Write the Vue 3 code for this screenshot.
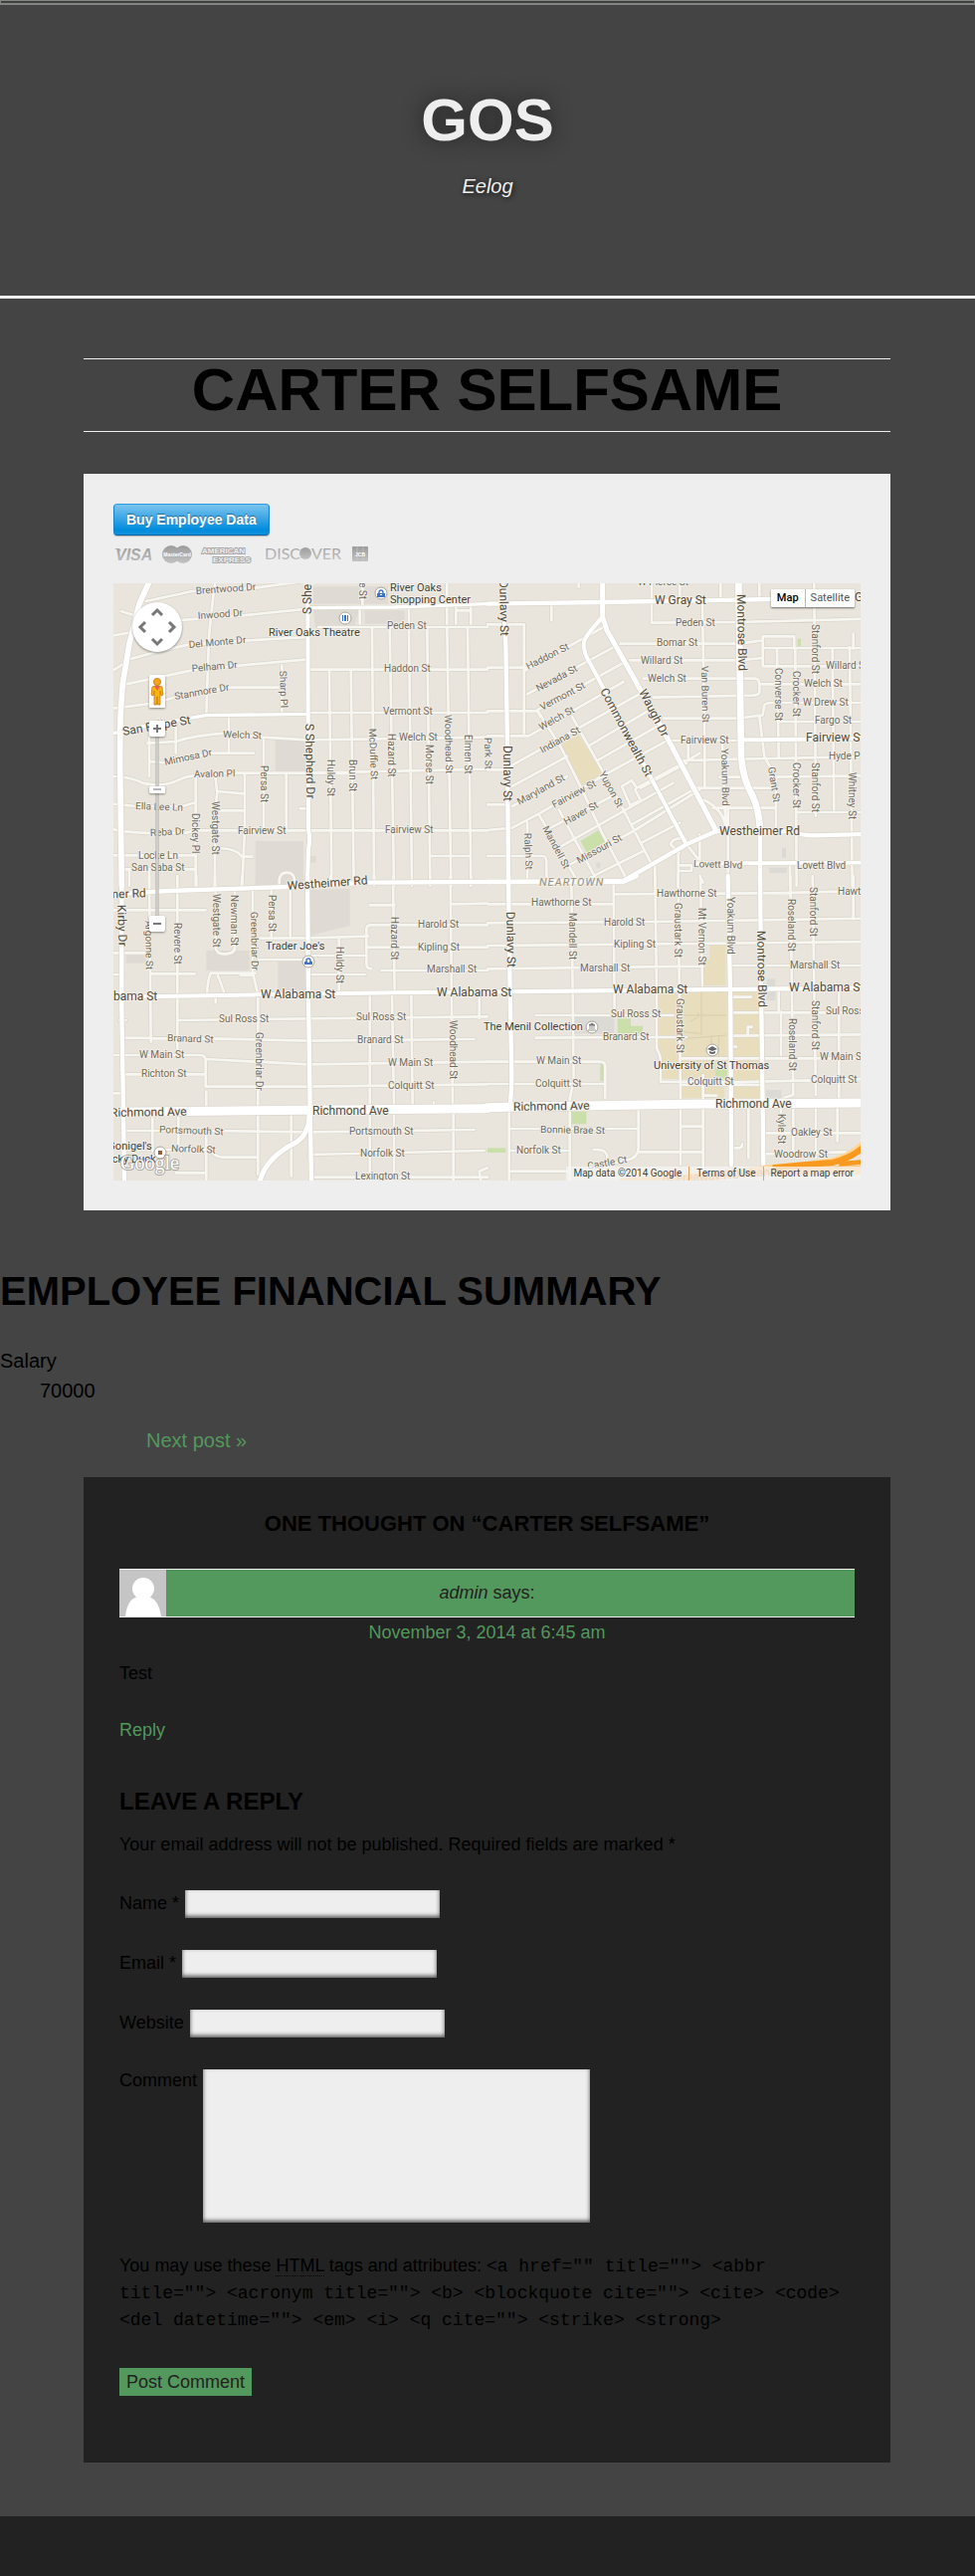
<script setup>
import { ref } from 'vue'

const mapType = ref('Map')
const fields = [
  { id: 'author', label: 'Name *', type: 'text' },
  { id: 'email', label: 'Email *', type: 'email' },
  { id: 'url', label: 'Website', type: 'url' },
]
const allowedTags =
  '<a href="" title=""> <abbr title=""> <acronym title=""> <b> <blockquote cite=""> <cite> <code> <del datetime=""> <em> <i> <q cite=""> <strike> <strong>'

// The map is drawn on four sheets, three sheet units to one map pixel.
const origin = { nw: [-12, -18], ne: [1128, -18], sw: [-12, 882], se: [1128, 882] }
const sheets = [
  {
    id: 'nw',
    areas: [
      ['block', 'M615 28H840V80H615ZM615 97H752L740 145 620 150ZM770 100H890V140H770ZM500 490h92v95h-92ZM440 795H585V930H440ZM605 840h18v20h-18Z'],
    ],
    minor:
      'M110 72L250 42 440 32 600 10M200 130L400 115 600 95M35 102L85 118M12 175L80 163M50 250L130 228 240 202 420 190 600 180M50 322L250 280 400 265 600 247M12 395L130 380 240 350 370 332H520M318 18Q310 80 300 180L292 412M520 265V405M12 280L40 262M115 500L200 495Q260 475 350 470L465 482 600 490 1140 482M120 555L180 560 310 530H435M12 600Q60 600 100 620 160 635 210 610 250 590 380 590H600L1140 578M12 683L80 690 220 690 260 678M12 760Q80 775 230 770L260 763H1140M12 838H260M40 880H260M120 470V600M200 440V530M360 415V525M465 490V760M533 590V760M260 590V930M318 590L325 650 318 700V930M408 590V760L400 930M325 645L405 652M325 703H405M325 817Q380 815 400 842H430M575 697H600M630 150H1140M763 18V90M755 95V140M903 95V150M1045 90V140M1090 90V140M1018 18V140M1045 100H1090M605 278H1140M605 408H1140M663 280L670 930M728 280L737 930M792 150L798 930M845 150L858 930M903 150L912 930M958 150L967 930M1018 150L1030 930M1080 150L1090 930M970 840H1085M512 930V912Q515 890 535 890 556 890 558 912V930M60 880V930M120 880V930',
    major: [
      [10, 'M12 470L100 450 290 416 600 412M600 92L860 90 1140 80'],
      [17, 'M118 18L90 80 60 200 40 320 33 420 32 560 37 930'],
      [12, 'M598 18L600 760Q607 790 600 820L597 930'],
    ],
  },
  {
    id: 'ne',
    areas: [
      ['school', 'M215 505L275 475 345 590 340 605 290 632Z'],
      ['park', 'M280 795L335 762 358 795 300 830ZM935 185h10v22h-10Z'],
      ['steel', 'M850 875h52v16h-52ZM888 815h12v30h-12ZM328 860h12v15h-12Z'],
    ],
    minor:
      'M0 142H110V470M0 272H115M0 403H150L160 420M0 478H125L410 315M115 280L350 150M120 352L390 205M150 400L415 255M50 580L470 345M60 637L240 540M310 505L480 405M75 690L240 600M335 550L510 450M75 755L160 710 345 600 545 490M190 755L375 660M215 815L560 620M250 865L440 765 640 640M310 905L470 825M435 745L630 635M465 800L580 740M150 400L220 510 285 640 345 770 420 910M255 420L345 580 410 700 495 865M155 715L265 905M215 700L325 905M495 137L760 135 1140 125M495 18V135M580 18V60M703 18V60M275 18V30M193 85V130M820 18V60M400 200H760L830 190M430 250H760L830 243M470 305H805Q820 305 820 325V345Q820 355 800 356L500 362M530 425H760L830 415 835 385Q840 378 860 378H1140M550 492H765M590 552L760 548 1140 540M620 635H870M700 602H760M860 602L1140 598M680 695H870M930 708H1140M830 178H925V213M830 178V268H1140M830 213H1140M820 322H1140M1103 170V215M878 435H1140M648 75L655 500V635M605 495V550M708 500L718 750M873 215L878 540M928 215L932 930M985 18L990 720M1040 213L1045 700M1092 210L1100 930M820 420L835 540 870 605V750M640 775V850M725 700V930M650 670Q715 700 718 760M505 870V930M575 830V930M580 885H615V868H580M120 740V905M0 840H165Q178 840 178 860V905M0 762L75 755M0 685H60M0 580H50M640 530L600 555 450 635 435 612 405 630 430 687 462 672 445 640M600 560L462 635M600 790Q560 780 552 805L578 830M600 805L640 855M912 860V930',
    major: [
      [11, 'M630 862L1140 860'],
      [13, 'M0 80L350 75 760 68 1140 60M45 18L55 200 60 500 63 930'],
      [15, 'M347 18V120L360 160 400 230 540 480 690 765'],
      [12, 'M347 120Q290 180 290 200 290 230 310 260L480 580 600 805M765 490L1140 486'],
      [13, 'M0 918L410 915 600 805 690 765 920 765Q940 778 990 778L1140 774'],
      [20, 'M757 18L765 540Q770 610 800 660 818 700 822 760'],
      [13, 'M822 750V930'],
    ],
  },
  {
    id: 'sw',
    areas: [
      ['block', 'M605 42L725 38V150L605 180ZM292 225h130v60h-130ZM508 255h88v100h-88ZM50 235h62v28h-62ZM440 0h85v30h-85Z'],
    ],
    minor:
      'M12 103H290M12 232H120M125 295H258M12 297H40M205 0V520M120 0L125 500M320 30V215Q322 235 345 235 378 235 378 215V40M318 0V30L300 42M318 30L332 42M400 0L398 30 385 42M398 30L412 42M262 0V30M432 40V290L448 360V690M488 40V185M545 30V180M450 188L600 187 780 182M450 252H600M600 240H775M790 280Q775 280 775 265V160Q775 148 790 148H1140M785 88H860M1035 85L1140 83M855 0L860 350M1028 0L1035 690M775 215H1140M820 285H1140M605 297H770M692 185V350M295 350Q295 320 305 293H440M325 295Q335 320 345 350M395 300H430M320 365V382M30 435H50M205 435L600 430 1140 424M40 488L300 490 600 497 1100 492M12 540H270Q290 540 290 555V635M290 552L600 568 1140 560M35 598H290M290 635H600L1140 628M12 655H35M292 650V700M785 360V690M852 360L858 690M910 360L914 690M1115 370V430M978 682V690M45 768H300L600 772 1100 765M140 825L300 825Q320 848 340 848H445M600 840L1130 828M610 908H1140M130 720V830M208 720V810M292 780V918M200 895H290M448 720V900M548 720V905M785 720V918M858 720V918M1037 715V918M600 0V18M667 0V20M737 0V20M798 0V20M967 0V20M1090 0V20M1120 918L1115 890 1140 880',
    major: [
      [13, 'M37 0V400L42 700 45 918'],
      [13, 'M597 0L600 360 605 700 609 918'],
      [12, 'M12 365L450 358 870 352 1140 350'],
      [13, 'M12 55L180 45 540 33 780 20 1140 18'],
      [15, 'M603 720Q602 780 560 805 470 850 452 925'],
      [27, 'M0 712L580 706 1140 701'],
    ],
  },
  {
    id: 'se',
    areas: [
      ['school', 'M670 210H718V330H650V250H670ZM513 350H722V612H530L515 520ZM738 350H820V670H738ZM585 630H715V670H585Z'],
      ['park', 'M392 430H432V452H468V475H392ZM340 560h10v58h-10ZM250 710h48v38h-48ZM0 820h55v14H0ZM688 580h34v28h-34Z'],
      ['steel', 'M262 425H382V475H262ZM842 310h26v66h-26ZM840 645h46v24h-46Z'],
    ],
    minor:
      'M0 85H380M380 55L850 52 1140 45M0 142L500 138 1140 128M0 210L720 203 1140 198M0 280L650 272M735 270H1140M145 420H560M735 412H1140M145 488L500 486H600M735 482L1140 478M0 560H340Q355 560 355 575V670M0 627H355M580 550H1140M525 620L740 622 1140 612M585 630H820M253 20L260 620 248 670V918M380 20L383 410M505 0L510 340V520Q522 540 522 560V620M575 0L582 680M642 0L648 340M650 600V918M582 700V870M878 340V410M913 0L922 660M980 0L990 660M1060 350V670M885 410V540M1103 0V130M650 20L640 0M65 762H455M455 700V820Q455 850 420 857L360 870M65 828H240M320 825Q365 820 362 860M65 890H240M455 832H650M585 755H650M787 700V850M740 820H760Q768 820 768 808M840 775H1140M835 838L1080 832M885 700V800M990 700V850M1055 700V800M922 700V850M65 710V918M735 365H795M735 515H750M785 475V455H797M655 662H690M865 680L920 660',
    major: [
      [13, 'M725 0L733 400 735 870'],
      [13, 'M63 0L68 350 73 600Q73 650 68 690M822 0L826 400 832 870'],
      [13, 'M0 350L600 343 1140 338M0 18H410L450 0'],
      [27, 'M0 698L600 688 1140 684'],
    ],
  },
]

// sheet, text, start x, baseline y, angle, kind
const labels = [
  ['nw', 'Brentwood Dr', 260, 50, -4], ['nw', 'Inwood Dr', 266, 127, -4], ['nw', 'Del Monte Dr', 240, 212, -5],
  ['nw', 'Pelham Dr', 250, 286, -5], ['nw', 'Stanmore Dr', 197, 370, -10], ['nw', 'Welch St', 343, 482, 2],
  ['nw', 'Mimosa Dr', 169, 568, -12], ['nw', 'Avalon Pl', 256, 603, -1], ['nw', 'Ella Lee Ln', 77, 700, 2],
  ['nw', 'Reba Dr', 124, 781, -3], ['nw', 'Locke Ln', 88, 849, 0], ['nw', 'San Saba St', 67, 886, 0],
  ['nw', 'Fairview St', 388, 773, 0], ['nw', 'Fairview St', 830, 772, 0], ['nw', 'Peden St', 836, 157, 0],
  ['nw', 'Haddon St', 829, 286, 0], ['nw', 'Vermont St', 826, 415, 0], ['nw', 'Welch St', 873, 493, 0],
  ['nw', 'Sharp Pl', 512, 282, 88], ['nw', 'Persa St', 456, 568, 90], ['nw', 'Huldy St', 656, 548, 90],
  ['nw', 'Brun St', 723, 550, 90], ['nw', 'McDuffie St', 784, 456, 88], ['nw', 'Hazard St', 841, 470, 90],
  ['nw', 'Morse St', 954, 505, 90], ['nw', 'Woodhead St', 1010, 415, 89], ['nw', 'Elmen St', 1071, 474, 90],
  ['nw', 'Park St', 1131, 484, 89], ['nw', 'Westgate St', 309, 676, 90], ['nw', 'Dickey Pl', 249, 710, 90],
  ['nw', 'e St', 754, 14, 90],
  ['nw', 'San Felipe St', 42, 476, -10, 'road'], ['nw', 'S Shepherd Dr', 590, 440, 89, 'road'],
  ['nw', 'S Shepherd Dr', 610, 112, -90, 'road'],
  ['nw', 'River Oaks Theatre', 481, 178, 0, 'place'], ['nw', 'River Oaks', 847, 41, 0, 'place'],
  ['nw', 'Shopping Center', 847, 77, 0, 'place'],
  ['ne', 'W Pierce St', 452, 25, 0], ['ne', 'W Gray St', 504, 82, 0, 'road'], ['ne', 'Gray St', 1106, 72, 0, 'road'],
  ['ne', 'Peden St', 567, 146, 0], ['ne', 'Bomar St', 510, 207, 0], ['ne', 'Willard St', 463, 262, 0],
  ['ne', 'Welch St', 484, 315, 0], ['ne', 'Fairview St', 583, 501, 0], ['ne', 'Willard St', 1019, 275, 0],
  ['ne', 'Welch St', 953, 331, 0], ['ne', 'W Drew St', 951, 388, 0], ['ne', 'Fargo St', 987, 440, 0],
  ['ne', 'Hyde Park', 1028, 549, 0], ['ne', 'Fairview St', 959, 496, 0, 'road'],
  ['ne', 'Haddon St', 124, 280, -27], ['ne', 'Nevada St', 153, 344, -28], ['ne', 'Vermont St', 164, 402, -28],
  ['ne', 'Welch St', 162, 462, -29], ['ne', 'Indiana St', 166, 530, -29], ['ne', 'Maryland St', 95, 688, -29],
  ['ne', 'Fairview St', 202, 696, -28], ['ne', 'Haver St', 236, 746, -29], ['ne', 'Missouri St', 276, 864, -29],
  ['ne', 'Mandell St', 166, 756, 62], ['ne', 'Yupon St', 337, 590, 62], ['ne', 'Ralph St', 112, 770, 88],
  ['ne', 'Commonwealth St', 340, 342, 62, 'road'], ['ne', 'Waugh Dr', 457, 346, 63, 'road'],
  ['ne', 'Dunlavy St', 36, 8, 89, 'road'], ['ne', 'Dunlavy St', 49, 507, 90, 'road'],
  ['ne', 'Montrose Blvd', 754, 50, 89, 'road'], ['ne', 'Van Buren St', 644, 266, 89], ['ne', 'Stanford St', 977, 140, 90],
  ['ne', 'Converse St', 866, 272, 90], ['ne', 'Crocker St', 920, 281, 90], ['ne', 'Crocker St', 921, 558, 90],
  ['ne', 'Stanford St', 978, 558, 90], ['ne', 'Whitney St', 1089, 588, 90], ['ne', 'Grant St', 845, 574, 81],
  ['ne', 'Yoakum Blvd', 704, 516, 89], ['ne', 'Westheimer Rd', 698, 777, 0, 'road'],
  ['ne', 'Lovett Blvd', 622, 874, 2], ['ne', 'Lovett Blvd', 932, 879, 0], ['se', 'NEARTOWN', 157, 30, 0, 'district'],
  ['sw', 'Westheimer Rd', 536, 43, -4, 'road'], ['sw', 'Westheimer Rd', -133, 72, -2, 'road'],
  ['sw', 'Kirby Dr', 25, 88, 88, 'road'], ['sw', 'Argonne St', 109, 136, 89], ['sw', 'Revere St', 195, 140, 90],
  ['sw', 'Westgate St', 312, 54, 90], ['sw', 'Newman St', 366, 58, 90], ['sw', 'Greenbriar Dr', 425, 108, 89],
  ['sw', 'Persa St', 480, 56, 90], ['sw', 'Hazard St', 850, 122, 90], ['sw', 'Huldy St', 684, 212, 90],
  ['sw', 'Harold St', 931, 157, 0], ['sw', 'Kipling St', 929, 224, 0], ['sw', 'Marshall St', 958, 292, 0],
  ["sw", "Trader Joe's", 470, 223, 0, 'place'], ['sw', 'W Alabama St', -80, 374, 0, 'road'],
  ['sw', 'W Alabama St', 455, 368, 0, 'road'], ['sw', 'W Alabama St', 986, 362, 0, 'road'],
  ['sw', 'Sul Ross St', 329, 442, 0], ['sw', 'Sul Ross St', 743, 436, 0], ['sw', 'Branard St', 173, 498, 2],
  ['sw', 'Branard St', 748, 504, 0], ['sw', 'W Main St', 89, 550, 0], ['sw', 'W Main St', 840, 572, 0],
  ['sw', 'Richton St', 96, 606, 0], ['sw', 'Colquitt St', 839, 641, 0], ['sw', 'Greenbriar Dr', 440, 471, 90],
  ['sw', 'Woodhead St', 1026, 436, 90], ['sw', 'Richmond Ave', 4, 727, -1, 'road'],
  ['sw', 'Richmond Ave', 611, 719, 0, 'road'], ['sw', 'Portsmouth St', 150, 775, 2], ['sw', 'Portsmouth St', 724, 779, 0],
  ['sw', 'Norfolk St', 186, 830, 2], ['sw', 'Norfolk St', 755, 847, 0], ['sw', 'Lexington St', 740, 915, 0],
  ["sw", "McGonigel's", -50, 826, 0, 'place'], ['sw', 'Mucky Duck', -39, 863, 0, 'place'],
  ['se', 'Hawthorne St', 131, 91, 0], ['se', 'Hawthorne St', 511, 62, 0], ['se', 'Hawthorne St', 1055, 58, 0],
  ['se', 'Harold St', 352, 149, 0], ['se', 'Kipling St', 382, 217, 0], ['se', 'Marshall St', 280, 287, 0],
  ['se', 'Marshall St', 912, 279, 0], ['se', 'Dunlavy St', 56, 109, 89, 'road'], ['se', 'Mandell St', 246, 110, 90],
  ['se', 'Graustark St', 565, 80, 90], ['se', 'Mt Vernon St', 637, 96, 90], ['se', 'Yoakum Blvd', 722, 64, 90],
  ['se', 'Montrose Blvd', 814, 165, 89, 'road'], ['se', 'Roseland St', 906, 68, 90], ['se', 'Stanford St', 973, 32, 90],
  ['se', 'W Alabama St', 378, 355, 0, 'road'], ['se', 'W Alabama St', 910, 347, 0, 'road'],
  ['se', 'Graustark St', 569, 370, 90], ['se', 'Sul Ross St', 371, 426, 0], ['se', 'Sul Ross St', 1019, 417, 0],
  ['se', 'The Menil Collection', -12, 466, 0, 'place'], ['se', 'Branard St', 349, 496, 0], ['se', 'Stanford St', 977, 374, 90],
  ['se', 'Roseland St', 910, 430, 90], ['se', 'W Main St', 146, 566, 0], ['se', 'W Main St', 1002, 556, 0],
  ['se', 'Colquitt St', 145, 635, 0], ['se', 'Colquitt St', 603, 630, 0], ['se', 'Colquitt St', 976, 625, 0],
  ['se', 'University of St Thomas', 502, 581, 0, 'place'], ['se', 'Richmond Ave', 79, 708, -1, 'road'],
  ['se', 'Richmond Ave', 688, 699, 0, 'road'], ['se', 'Bonnie Brae St', 160, 773, 1], ['se', 'Norfolk St', 86, 836, 0],
  ['se', 'Castle Ct', 304, 884, -10], ['se', 'Oakley St', 914, 784, 0], ['se', 'Woodrow St', 863, 848, 0],
  ['se', 'Kyle St', 877, 717, 90], ['se', 'of Freeway HOV Lanes', 528, 926, -4, 'freeway'],
].map(([sheet, text, x, y, angle, kind = 'street']) => ({
  text,
  kind,
  at: `translate(${Math.round((x + origin[sheet][0]) / 3)} ${Math.round((y + origin[sheet][1]) / 3)}) rotate(${angle})`,
}))
</script>

<template>
  <div class="page">
    <div class="strip"></div>
    <header class="site-header">
      <h1>GOS</h1>
      <p>Eelog</p>
    </header>

    <main>
      <article class="column">
        <h2 class="post-title">CARTER SELFSAME</h2>
        <section class="panel">
          <button class="buy" type="button">Buy Employee Data</button>
          <svg class="cards" width="260" height="20" viewBox="0 0 260 20" role="img" aria-label="Accepted cards">
            <defs>
              <linearGradient id="grey" x1="0" y1="0" x2="0" y2="1">
                <stop offset="0" stop-color="#9c9c9c" />
                <stop offset="1" stop-color="#c2c2c2" />
              </linearGradient>
            </defs>
            <text x="2" y="17" class="visa">VISA</text>
            <path d="M1 5h5l2 3z" fill="#a5a5a5" />
            <circle cx="58" cy="11" r="9" fill="url(#grey)" />
            <circle cx="70" cy="11" r="9" fill="url(#grey)" />
            <text x="64" y="13" class="mc">MasterCard</text>
            <text x="89" y="10" class="amex">AMERICAN</text>
            <text x="100" y="19" class="amex">EXPRESS</text>
            <text x="152" y="16" class="disc">DISC</text>
            <circle cx="193" cy="10" r="6" fill="url(#grey)" />
            <text x="199" y="16" class="disc">VER</text>
            <rect x="240" y="3" width="16" height="15" rx="1" fill="url(#grey)" />
            <path d="M245 3v15M251 3v15" stroke="#d0d0d0" stroke-width=".5" />
            <text x="248" y="13" class="mc">JCB</text>
          </svg>

          <div class="map">
            <svg class="map-art" viewBox="0 0 751 600" role="img" aria-label="Street map of Neartown">
              <rect width="751" height="600" fill="#e9e5dc" />
              <g transform="scale(.33333)">
                <g v-for="s in sheets" :key="s.id" :transform="`translate(${origin[s.id]})`">
                  <path v-for="a in s.areas" :key="a[1]" :class="a[0]" :d="a[1]" />
                </g>
                <g v-for="s in sheets" :key="s.id" :transform="`translate(${origin[s.id]})`">
                  <path class="minor-edge" :d="s.minor" />
                </g>
                <g v-for="s in sheets" :key="s.id" :transform="`translate(${origin[s.id]})`">
                  <path class="minor" :d="s.minor" />
                </g>
                <g v-for="s in sheets" :key="s.id" :transform="`translate(${origin[s.id]})`">
                  <path v-for="m in s.major" :key="m[1]" class="major-edge" :stroke-width="m[0] + 4" :d="m[1]" />
                </g>
                <g v-for="s in sheets" :key="s.id" :transform="`translate(${origin[s.id]})`">
                  <path v-for="m in s.major" :key="m[1]" class="major" :stroke-width="m[0]" :d="m[1]" />
                </g>
                <g transform="translate(1128 882)" fill="none">
                  <path d="M590 470L640 475M645 350V480M590 420H720M600 490L720 480M610 440L635 425V412M675 480V545M697 480V545" stroke="#d8cfae" stroke-width="3" />
                  <path d="M400 925L600 912 830 888 1140 886" stroke="#fdc37a" stroke-width="26" />
                  <path d="M830 878L960 868 1040 856Q1100 838 1135 800" stroke="#ffd591" stroke-width="12" />
                  <path d="M860 880L960 870 1040 864Q1100 850 1140 812" stroke="#f79a1f" stroke-width="18" />
                  <path d="M1060 868L1140 862" stroke="#f79a1f" stroke-width="14" />
                </g>
              </g>

              <text v-for="(l, i) in labels" :key="i" :class="l.kind" :transform="l.at">{{ l.text }}</text>

              <g fill="#fff" stroke="#aaa69d" stroke-width="1">
                <circle cx="269" cy="10" r="6" /><circle cx="233" cy="35" r="6" />
                <circle cx="196" cy="380" r="6" /><circle cx="47" cy="572" r="6" />
                <circle cx="481" cy="446" r="6" /><circle cx="602" cy="469" r="6" />
              </g>
              <g fill="#3f73c4">
                <path d="M230 32h1v6h-1zM232 32h2v6h-2zM235 32h1v6h-1z" />
                <path d="M265 10h8v4h-8zM192 380h8v3h-8z" />
                <path d="M267 10v-1a2 2 0 0 1 4 0v1M194 380v-1a2 2 0 0 1 4 0v1" fill="none" stroke="#3f73c4" stroke-width="1.4" />
                <path d="M268 11h2v1h-2zM195 380h2v1h-2z" fill="#fff" />
              </g>
              <path d="M45 570h4v4h-4z" fill="#95603c" />
              <path d="M478 444l3-2 3 2zM478 445h6M478 447h6M477 449h8" fill="#777" stroke="#777" stroke-width=".8" />
              <path d="M597 468l5-3 5 3-5 2zM599 470v2q3 2 6 0v-2l-3 1z" fill="#666" />
              <text x="7" y="589" class="logo">Google</text>

              <path d="M44 150V336" stroke="#a9a69e" stroke-width="3" />
              <path d="M44 150V336" stroke="#f4f4f4" stroke-width="1" />
              <g class="controls">
                <circle cx="44" cy="44" r="25" fill="#fff" />
                <g fill="none" stroke="#777" stroke-width="3">
                  <path d="M39 32l5-5 5 5M39 56l5 5 5-5M32 39l-5 5 5 5M56 39l5 5-5 5" />
                </g>
                <rect x="36" y="92" width="16" height="33" rx="1" fill="#fff" />
                <rect x="36" y="138" width="16" height="16" rx="2" fill="#fff" />
                <rect x="36" y="204" width="16" height="7" rx="1" fill="#fff" />
                <rect x="36" y="334" width="16" height="16" rx="2" fill="#fff" />
                <path d="M40 146h8M44 142v8M40 342h8" stroke="#777" stroke-width="2" />
                <path d="M40 207h8" stroke="#777" />
              </g>
              <g stroke="#c27a10" stroke-width=".8">
                <path d="M39 104q5-3 10 0l1 8-2 1-1-5v14h-2.500v-8h-1v8H41v-14l-1 5-2-1z" fill="#fbb40c" />
                <circle cx="44" cy="99" r="3.600" fill="#f3a51a" />
              </g>
              <path d="M41 103h6l-3 5z" fill="#ef5a5a" />
            </svg>
            <div class="map-types">
              <button v-for="t in ['Map', 'Satellite']" :key="t" type="button" :class="{ on: mapType === t }" @click="mapType = t">{{ t }}</button>
            </div>
            <div class="credits">
              <span>Map data ©2014 Google</span>
              <a href="#terms">Terms of Use</a>
              <a href="#report">Report a map error</a>
            </div>
          </div>
        </section>
      </article>

      <section class="summary">
        <h2>EMPLOYEE FINANCIAL SUMMARY</h2>
        <dl>
          <dt>Salary</dt>
          <dd>70000</dd>
        </dl>
      </section>

      <nav class="next"><a href="#next">Next post »</a></nav>

      <div class="column">
        <section class="comments">
          <h3 class="thoughts">ONE THOUGHT ON “CARTER SELFSAME”</h3>
          <div class="author">
            <svg class="avatar" viewBox="0 0 47 47" aria-hidden="true">
              <rect width="47" height="47" fill="#c5c5c5" />
              <ellipse cx="24" cy="19" rx="11" ry="11" fill="#fff" />
              <path d="M6 47Q8 28 20 27h8q11 1 14 20z" fill="#fff" />
            </svg>
            <span><cite>admin</cite> says:</span>
          </div>
          <p class="date"><a href="#comment">November 3, 2014 at 6:45 am</a></p>
          <p class="body">Test</p>
          <p class="reply"><a href="#respond">Reply</a></p>

          <h3 class="leave">LEAVE A REPLY</h3>
          <form @submit.prevent>
            <p class="note">Your email address will not be published. Required fields are marked *</p>
            <div v-for="f in fields" :key="f.id" class="row">
              <label :for="f.id">{{ f.label }}</label>
              <input :id="f.id" :type="f.type" />
            </div>
            <div class="row message">
              <label for="comment-text">Comment</label>
              <textarea id="comment-text"></textarea>
            </div>
            <p class="tags">You may use these <abbr title="HyperText Markup Language">HTML</abbr> tags and attributes: <code>{{ allowedTags }}</code></p>
            <button class="post" type="submit">Post Comment</button>
          </form>
        </section>
      </div>
    </main>
    <footer></footer>
  </div>
</template>

<style>
body {
  margin: 0;
  background: #444;
}
</style>

<style scoped>
.page {
  font: 18px/27px "Liberation Sans", Arial, sans-serif;
  color: #000;
  background: #444;
}
h1, h2, h3, p, dl, dd { margin: 0; }
a { color: #53985c; text-decoration: none; }

.strip {
  height: 2px;
  background: #3d403d;
  border: 1px solid #838683;
  border-bottom-width: 2px;
}
.site-header {
  padding: 80px 0 95px;
  border-bottom: 3px solid #eee;
  text-align: center;
  color: #eee;
}
.site-header h1 {
  font-size: 60px;
  line-height: 72px;
  text-shadow: 0 0 20px #222;
}
.site-header p {
  margin-top: 15px;
  font-size: 20px;
  line-height: 30px;
  font-style: italic;
  text-shadow: 1px 1px 5px #111;
}
.column { padding: 0 85px 0 84px; }
.post-title {
  margin: 60px 0 42px;
  padding-bottom: 10px;
  border: solid #eee;
  border-width: 1px 0;
  font-size: 60px;
  line-height: 62px;
  text-align: center;
}
.panel { padding: 30px; background: #eee; }
.buy {
  display: block;
  height: 32px;
  margin-bottom: 8px;
  padding: 0 12px;
  border: 1px solid #0d80c9;
  border-color: #2c9be0 #1683c7 #0567a8;
  border-radius: 4px;
  background: linear-gradient(#7cc5ef, #2d9fe3 55%, #008cdd 85%, #1492dc);
  box-shadow: 0 1px 1px #0004;
  font: bold 14px/30px "Liberation Sans", Arial, sans-serif;
  color: #fff;
  text-shadow: 0 -1px 1px #0006;
}
.cards { display: block; margin-bottom: 20px; font-family: "Liberation Sans", Arial, sans-serif; }
.visa { font-size: 16px; font-weight: bold; font-style: italic; fill: url(#grey); }
.mc { font-size: 5px; font-weight: bold; fill: #fff; text-anchor: middle; }
.amex { font-size: 8px; font-weight: bold; fill: #eee; stroke: #a8a8a8; stroke-width: 2px; paint-order: stroke; }
.disc { font-family: Lato, sans-serif; font-size: 16px; fill: url(#grey); }

.map { position: relative; overflow: hidden; }
.map-art { display: block; width: 100%; height: auto; font-family: Roboto, sans-serif; }
.block { fill: #dfdad3; }
.steel { fill: #dcdad5; }
.school { fill: #e8ddbd; }
.park { fill: #cadfaa; }
.minor-edge, .minor, .major-edge, .major { fill: none; stroke-linecap: round; stroke-linejoin: round; }
.minor-edge { stroke: #d9d5ca; stroke-width: 12px; }
.minor { stroke: #f8f6f1; stroke-width: 8px; }
.major-edge { stroke: #dad6cc; }
.major { stroke: #fff; }
.street, .road, .place, .district {
  font-size: 10px;
  fill: #716d5f;
  stroke: #f1eee8;
  stroke-width: 2px;
  stroke-linejoin: round;
  paint-order: stroke;
}
.road { font-size: 12px; fill: #514d3d; }
.place { font-size: 11px; fill: #464336; }
.district { font-size: 11px; font-style: italic; letter-spacing: 1px; fill: #9b9179; }
.freeway { font-size: 12px; fill: #c98f58; }
.logo {
  font: 20px "Liberation Serif", serif;
  fill: #fff;
  stroke: #8e8b84aa;
  stroke-width: 2px;
  paint-order: stroke;
}
.controls { filter: drop-shadow(0 1px 1px #0006); }
.map-types {
  position: absolute;
  top: 6px;
  right: 6px;
  display: flex;
  background: #fff;
  border-radius: 1px;
  box-shadow: 0 1px 2px #0008;
}
.map-types button {
  height: 18px;
  padding: 0 5px;
  border: 0;
  background: none;
  font: 11px/16px Roboto, sans-serif;
  color: #555;
}
.map-types button + button { border-left: 1px solid #bbb; }
.map-types .on { padding: 0 6px; font-weight: 500; color: #000; }
.credits {
  position: absolute;
  right: 0;
  bottom: 0;
  display: flex;
  background: #f5f5f5b8;
  font: 10px/14px Roboto, sans-serif;
  color: #444;
}
.credits > * { padding: 0 7px; color: #444; }
.credits a { border-left: 1px solid #e0a060; }

.summary h2 { margin-top: 57px; font-size: 40px; line-height: 48px; }
.summary dl { margin-top: 31px; font-size: 20px; line-height: 30px; }
.summary dd { padding-left: 40px; }
.next { margin: 20px 0 22px; padding-left: 147px; font-size: 20px; line-height: 30px; }

.comments { padding: 32px 36px 67px; background: #222; }
.thoughts { font-size: 22px; line-height: 30px; text-align: center; }
.author {
  position: relative;
  margin-top: 30px;
  border: solid #eee;
  border-width: 1px 0;
  background: #53985c;
  color: #222;
  line-height: 47px;
  text-align: center;
}
.avatar { position: absolute; left: 0; top: 0; width: 47px; height: 47px; }
.date { line-height: 30px; text-align: center; }
.body { margin-top: 13px; }
.reply { margin-top: 30px; }
.leave { margin-top: 43px; font-size: 24px; line-height: 30px; }
.note { margin: 15px 0 32px; }
.row { display: flex; align-items: flex-start; gap: 6px; margin-bottom: 32px; line-height: 26px; }
.row input, .row textarea {
  box-sizing: border-box;
  width: 256px;
  height: 28px;
  padding: 2px 6px;
  border: 0;
  background: #eee;
  box-shadow: inset 0 -2px 4px #000a;
  font: 18px/24px "Liberation Sans", Arial, sans-serif;
}
.row textarea { width: 389px; height: 154px; resize: none; }
.message { margin-bottom: 30px; line-height: 22px; }
.tags code { font-family: "Liberation Mono", monospace; font-size: 18px; line-height: 18px; }
.tags abbr { text-decoration: none; border-bottom: 1px dotted #000; }
.post {
  display: block;
  height: 28px;
  margin-top: 35px;
  padding: 0 7px;
  border: 0;
  background: #53985c;
  font: 18px/26px "Liberation Sans", Arial, sans-serif;
  color: #222;
}
footer { height: 60px; margin-top: 54px; background: #222; }
</style>
